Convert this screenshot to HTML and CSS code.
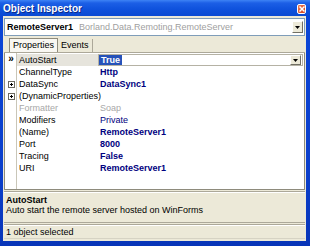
FILE: index.html
```html
<!DOCTYPE html>
<html lang="en">
<head>
  <meta charset="UTF-8" />
  <title>Object Inspector</title>
  <link rel="stylesheet" href="styles.css">
</head>
<body>
  <div class="window">
    <div class="titlebar">
      <span class="title">Object Inspector</span>
      <span class="close">
        <svg width="6" height="6" viewBox="0 0 6 6"><path d="M0.5 0.5 L5.5 5.5 M5.5 0.5 L0.5 5.5" stroke="#fff" stroke-width="1.5"/></svg>
      </span>
    </div>
    <div class="client">
      <div class="combo">
        <span class="obj-name">RemoteServer1</span>
        <span class="obj-type">Borland.Data.Remoting.RemoteServer</span>
        <span class="drop-btn"><svg width="5" height="3" viewBox="0 0 5 3"><path d="M0 0 H5 L2.5 3 Z" fill="#000"/></svg></span>
      </div>
      <div class="tabs">
        <span class="tab active">Properties</span>
        <span class="tab">Events</span>
      </div>
      <div class="grid">
        <div class="row selected">
          <span class="gutter arrow">&raquo;</span>
          <span class="name">AutoStart</span>
          <span class="value editor">
            <span class="hilite">True</span>
            <span class="drop-btn small"><svg width="5" height="3" viewBox="0 0 5 3"><path d="M0 0 H5 L2.5 3 Z" fill="#000"/></svg></span>
          </span>
        </div>
        <div class="row">
          <span class="gutter"></span>
          <span class="name">ChannelType</span>
          <span class="value bold">Http</span>
        </div>
        <div class="row">
          <span class="gutter"><span class="plus"></span></span>
          <span class="name">DataSync</span>
          <span class="value bold">DataSync1</span>
        </div>
        <div class="row">
          <span class="gutter"><span class="plus"></span></span>
          <span class="name">(DynamicProperties)</span>
          <span class="value"></span>
        </div>
        <div class="row disabled">
          <span class="gutter"></span>
          <span class="name">Formatter</span>
          <span class="value">Soap</span>
        </div>
        <div class="row">
          <span class="gutter"></span>
          <span class="name">Modifiers</span>
          <span class="value">Private</span>
        </div>
        <div class="row">
          <span class="gutter"></span>
          <span class="name">(Name)</span>
          <span class="value bold">RemoteServer1</span>
        </div>
        <div class="row">
          <span class="gutter"></span>
          <span class="name">Port</span>
          <span class="value bold">8000</span>
        </div>
        <div class="row">
          <span class="gutter"></span>
          <span class="name">Tracing</span>
          <span class="value bold">False</span>
        </div>
        <div class="row">
          <span class="gutter"></span>
          <span class="name">URI</span>
          <span class="value bold">RemoteServer1</span>
        </div>
      </div>
      <div class="desc">
        <div class="desc-title">AutoStart</div>
        <div class="desc-text">Auto start the remote server hosted on WinForms</div>
      </div>
      <div class="status">1 object selected</div>
    </div>
  </div>
</body>
</html>
```

FILE: styles.css
```css
body {
  margin: 0;
  font-family: "Liberation Sans", Arial, sans-serif;
  font-size: 9px;
  color: #000;
  background: #fff;
}
.window {
  width: 310px;
  height: 246px;
  display: flex;
  flex-direction: column;
  background: linear-gradient(to bottom, #0a46d8, #0b3fcb 70%, #0835b8);
  overflow: hidden;
}
.titlebar {
  height: 16px;
  flex: none;
  display: flex;
  align-items: center;
  justify-content: space-between;
  padding: 0 4px 0 3px;
  background: linear-gradient(to bottom, #3d83f5 0, #1c5fe6 3px, #0f52dd 9px, #0b4ad2 100%);
}
.title {
  color: #fff;
  font-weight: bold;
  font-size: 10px;
  text-shadow: 1px 1px 0 #0a2a8a;
}
.close {
  width: 9px;
  height: 10px;
  box-sizing: border-box;
  margin-top: 2px;
  display: flex;
  align-items: center;
  justify-content: center;
  background: linear-gradient(135deg, #ee7a55, #d5421c);
  border: 1px solid #fff;
  border-radius: 2px;
}
.client {
  flex: 1;
  margin: 0 4px 5px 3px;
  padding: 2px 1px 2px 1px;
  background: #ece9d8;
  display: flex;
  flex-direction: column;
}
.combo {
  height: 18px;
  box-sizing: border-box;
  display: flex;
  align-items: center;
  background: #fff;
  border: 1px solid #7f9db9;
  padding: 0 1px 0 2px;
}
.obj-name {
  font-weight: bold;
}
.obj-type {
  color: #a0a0a0;
  margin-left: 6px;
  flex: 1;
}
.drop-btn {
  width: 11px;
  height: 12px;
  box-sizing: border-box;
  display: flex;
  align-items: center;
  justify-content: center;
  background: #ece9d8;
  border-top: 1px solid #fff;
  border-left: 1px solid #fff;
  border-right: 1px solid #716f64;
  border-bottom: 1px solid #716f64;
}
.drop-btn.small {
  height: 10px;
}
.tabs {
  height: 16px;
  margin-top: 1px;
  box-sizing: border-box;
  display: flex;
  align-items: flex-end;
  padding-left: 5px;
  border-bottom: 1px solid #aca899;
}
.tab {
  height: 13px;
  line-height: 13px;
  padding: 0 3px;
  box-sizing: border-box;
  border-right: 1px solid #aca899;
}
.tab.active {
  background: #f8f7f2;
  border: 1px solid #8e8b7c;
  border-bottom: none;
  height: 14px;
}
.grid {
  height: 137px;
  box-sizing: border-box;
  border: 1px solid #8e8b7c;
  border-top: none;
  background:
    linear-gradient(to right, transparent 11px, #c9c6b8 11px, #c9c6b8 12px, transparent 12px),
    #fff;
  padding-top: 1px;
}
.row {
  height: 12px;
  display: grid;
  grid-template-columns: 12px 81px 1fr;
  align-items: center;
  line-height: 12px;
}
.gutter {
  display: flex;
  align-items: center;
  justify-content: center;
  height: 12px;
}
.arrow {
  font-weight: bold;
  font-size: 10px;
  line-height: 10px;
  margin-top: -2px;
}
.plus {
  width: 7px;
  height: 7px;
  box-sizing: border-box;
  border: 1px solid #6d6b62;
  background:
    linear-gradient(#000, #000) center / 3px 1px no-repeat,
    linear-gradient(#000, #000) center / 1px 3px no-repeat,
    #fff;
}
.name {
  padding-left: 2px;
  white-space: nowrap;
}
.row.selected .name {
  background: #e6e4dc;
}
.value {
  color: #000080;
  padding-left: 2px;
  white-space: nowrap;
}
.value.bold {
  font-weight: bold;
}
.row.disabled .name,
.row.disabled .value {
  color: #a8a8a8;
}
.editor {
  height: 12px;
  box-sizing: border-box;
  display: flex;
  align-items: center;
  justify-content: space-between;
  padding: 0 1px 0 0;
  background: #fff;
  border: 1px solid #b5b2a4;
  margin-right: 1px;
}
.hilite {
  background: #2652b9;
  color: #fff;
  font-weight: bold;
  padding: 0 2px;
  line-height: 10px;
}
.desc {
  height: 32px;
  margin-top: 1px;
  box-sizing: border-box;
  padding: 3px 2px 0;
  border-top: 1px solid #aca899;
  border-bottom: 1px solid #aca899;
  box-shadow: inset 0 1px 0 #fff;
}
.desc-title {
  font-weight: bold;
}
.status {
  height: 15px;
  margin-top: 1px;
  box-sizing: border-box;
  padding: 0 2px;
  line-height: 14px;
  border-top: 1px solid #aca899;
  border-bottom: 1px solid #d6d3c4;
  box-shadow: inset 0 1px 0 #fff;
}
```
